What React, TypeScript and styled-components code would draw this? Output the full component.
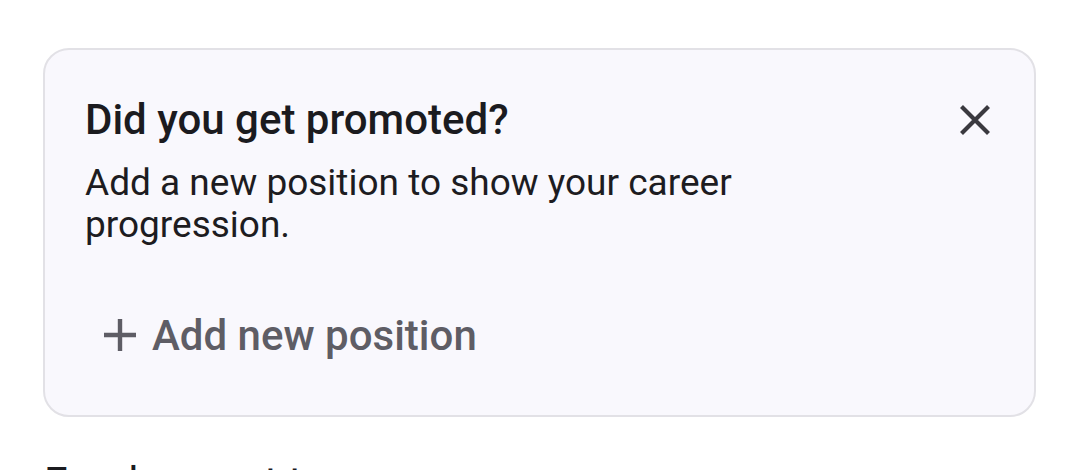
import React from 'react';
import styled, { createGlobalStyle } from 'styled-components';

const GlobalStyle = createGlobalStyle`
  html, body {
    margin: 0;
    padding: 0;
    background: #ffffff;
    overflow: hidden;
  }
  body {
    font-family: Roboto, "Noto Sans", sans-serif;
    -webkit-font-smoothing: antialiased;
  }
`;

const Page = styled.div`
  width: 1080px;
  height: 470px;
  padding: 48px 44px 0 43px;
  box-sizing: border-box;
  overflow: hidden;
`;

const Card = styled.section`
  box-sizing: border-box;
  height: 369px;
  background: #f9f8fd;
  border: 2px solid #e2e1e6;
  border-radius: 26px;
  padding: 46px 35px 0 40px;
  display: flex;
  flex-direction: column;
`;

const Header = styled.div`
  display: flex;
  align-items: flex-start;
  justify-content: space-between;
`;

const Title = styled.h2`
  margin: 0;
  font-size: 42px;
  line-height: 48px;
  font-weight: 500;
  color: #1b1b1f;
`;

const CloseButton = styled.button`
  border: none;
  background: none;
  padding: 0;
  width: 48px;
  height: 48px;
  display: flex;
  align-items: center;
  justify-content: center;
  color: #3a393f;
  cursor: pointer;
`;

const Body = styled.p`
  margin: 18px 0 0;
  font-size: 37px;
  line-height: 42px;
  font-weight: 400;
  color: #1d1c21;
  max-width: 700px;
`;

const ActionButton = styled.button`
  align-self: flex-start;
  margin: 66px 0 0 19px;
  padding: 0;
  border: none;
  background: none;
  display: flex;
  align-items: center;
  gap: 16px;
  font-family: Roboto, "Noto Sans", sans-serif;
  font-size: 42px;
  font-weight: 500;
  line-height: 48px;
  color: #5e5d65;
  cursor: pointer;

  svg {
    margin-top: -3px;
  }
`;

const FooterLabel = styled.div`
  margin-top: 42px;
  padding-left: 1px;
  font-size: 42px;
  line-height: 48px;
  color: #1b1b1f;
  white-space: nowrap;
`;

const CloseIcon = () => (
  <svg width="32" height="32" viewBox="0 0 32 32" fill="none">
    <path d="M2.5 2.5L29.5 29.5M29.5 2.5L2.5 29.5" stroke="currentColor" strokeWidth="4.2" />
  </svg>
);

const PlusIcon = () => (
  <svg width="32" height="32" viewBox="0 0 32 32" fill="none">
    <path d="M16 0V32M0 16H32" stroke="currentColor" strokeWidth="4.4" />
  </svg>
);

const App: React.FC = () => {
  return (
    <>
      <GlobalStyle />
      <Page>
        <Card>
          <Header>
            <Title>Did you get promoted?</Title>
            <CloseButton aria-label="Dismiss">
              <CloseIcon />
            </CloseButton>
          </Header>
          <Body>Add a new position to show your career progression.</Body>
          <ActionButton>
            <PlusIcon />
            Add new position
          </ActionButton>
        </Card>
        <FooterLabel>Employment type</FooterLabel>
      </Page>
    </>
  );
};

export default App;
